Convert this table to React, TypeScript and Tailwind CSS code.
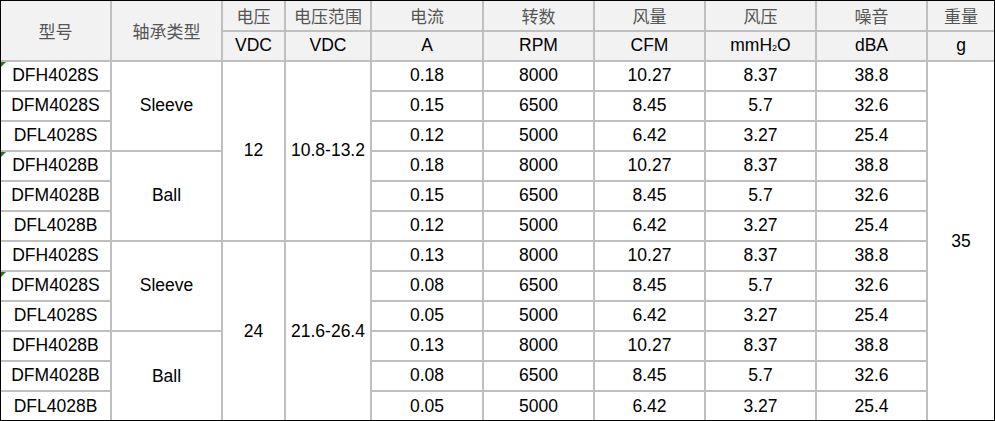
const latin = "font-['Liberation_Sans',Arial,sans-serif]";

type Row = { model: string; mark?: boolean; amp: string; rpm: string; cfm: string; pa: string; db: string };

const groups = [
  {
    volt: "12",
    range: "10.8-13.2",
    bearings: [
      {
        name: "Sleeve",
        rows: [
          { model: "DFH4028S", mark: true, amp: "0.18", rpm: "8000", cfm: "10.27", pa: "8.37", db: "38.8" },
          { model: "DFM4028S", amp: "0.15", rpm: "6500", cfm: "8.45", pa: "5.7", db: "32.6" },
          { model: "DFL4028S", amp: "0.12", rpm: "5000", cfm: "6.42", pa: "3.27", db: "25.4" },
        ] as Row[],
      },
      {
        name: "Ball",
        rows: [
          { model: "DFH4028B", mark: true, amp: "0.18", rpm: "8000", cfm: "10.27", pa: "8.37", db: "38.8" },
          { model: "DFM4028B", amp: "0.15", rpm: "6500", cfm: "8.45", pa: "5.7", db: "32.6" },
          { model: "DFL4028B", amp: "0.12", rpm: "5000", cfm: "6.42", pa: "3.27", db: "25.4" },
        ] as Row[],
      },
    ],
  },
  {
    volt: "24",
    range: "21.6-26.4",
    bearings: [
      {
        name: "Sleeve",
        rows: [
          { model: "DFH4028S", amp: "0.13", rpm: "8000", cfm: "10.27", pa: "8.37", db: "38.8" },
          { model: "DFM4028S", mark: true, amp: "0.08", rpm: "6500", cfm: "8.45", pa: "5.7", db: "32.6" },
          { model: "DFL4028S", amp: "0.05", rpm: "5000", cfm: "6.42", pa: "3.27", db: "25.4" },
        ] as Row[],
      },
      {
        name: "Ball",
        rows: [
          { model: "DFH4028B", amp: "0.13", rpm: "8000", cfm: "10.27", pa: "8.37", db: "38.8" },
          { model: "DFM4028B", amp: "0.08", rpm: "6500", cfm: "8.45", pa: "5.7", db: "32.6" },
          { model: "DFL4028B", amp: "0.05", rpm: "5000", cfm: "6.42", pa: "3.27", db: "25.4" },
        ] as Row[],
      },
    ],
  },
];

const cell = "border-2 border-[#bfbfbf] text-center align-middle p-0";
const zh = "font-['Noto_Sans_CJK_SC',sans-serif] text-[17px] text-[#555] font-normal";

export default function App() {
  return (
    <div className="w-[995px] h-[421px] border border-black bg-white overflow-hidden">
      <table className={`w-[993px] table-fixed border-collapse border-hidden text-[17.5px] text-black leading-none ${latin}`}>
        <colgroup>
          <col className="w-[110px]" />
          <col className="w-[111px]" />
          <col className="w-[63px]" />
          <col className="w-[86px]" />
          <col className="w-[112px]" />
          <col className="w-[111px]" />
          <col className="w-[111px]" />
          <col className="w-[111px]" />
          <col className="w-[111px]" />
          <col className="w-[67px]" />
        </colgroup>
        <thead className="bg-[#f2f2f2]">
          <tr className="h-[30px]">
            <th rowSpan={2} className={`${cell} ${zh}`}>型号</th>
            <th rowSpan={2} className={`${cell} ${zh}`}>轴承类型</th>
            <th className={`${cell} ${zh}`}>电压</th>
            <th className={`${cell} ${zh}`}>电压范围</th>
            <th className={`${cell} ${zh}`}>电流</th>
            <th className={`${cell} ${zh}`}>转数</th>
            <th className={`${cell} ${zh}`}>风量</th>
            <th className={`${cell} ${zh}`}>风压</th>
            <th className={`${cell} ${zh}`}>噪音</th>
            <th className={`${cell} ${zh}`}>重量</th>
          </tr>
          <tr className="h-[30px]">
            <td className={cell}>VDC</td>
            <td className={cell}>VDC</td>
            <td className={cell}>A</td>
            <td className={cell}>RPM</td>
            <td className={cell}>CFM</td>
            <td className={cell}>
              mmH<span className="text-[9px]">2</span>O
            </td>
            <td className={cell}>dBA</td>
            <td className={cell}>g</td>
          </tr>
        </thead>
        <tbody>
          {groups.map((g, gi) =>
            g.bearings.map((b, bi) =>
              b.rows.map((r, ri) => (
                <tr key={`${gi}-${bi}-${ri}`} className="h-[30px]">
                  <td className={`${cell} relative`}>
                    {r.mark && (
                      <span className="absolute left-0 top-0 w-0 h-0 border-t-[5px] border-r-[5px] border-t-[#1e7b1e] border-r-transparent" />
                    )}
                    {r.model}
                  </td>
                  {ri === 0 && (
                    <td rowSpan={3} className={cell}>
                      {b.name}
                    </td>
                  )}
                  {bi === 0 && ri === 0 && (
                    <>
                      <td rowSpan={6} className={cell}>{g.volt}</td>
                      <td rowSpan={6} className={cell}>{g.range}</td>
                    </>
                  )}
                  <td className={cell}>{r.amp}</td>
                  <td className={cell}>{r.rpm}</td>
                  <td className={cell}>{r.cfm}</td>
                  <td className={cell}>{r.pa}</td>
                  <td className={cell}>{r.db}</td>
                  {gi === 0 && bi === 0 && ri === 0 && (
                    <td rowSpan={12} className={cell}>35</td>
                  )}
                </tr>
              ))
            )
          )}
        </tbody>
      </table>
    </div>
  );
}
